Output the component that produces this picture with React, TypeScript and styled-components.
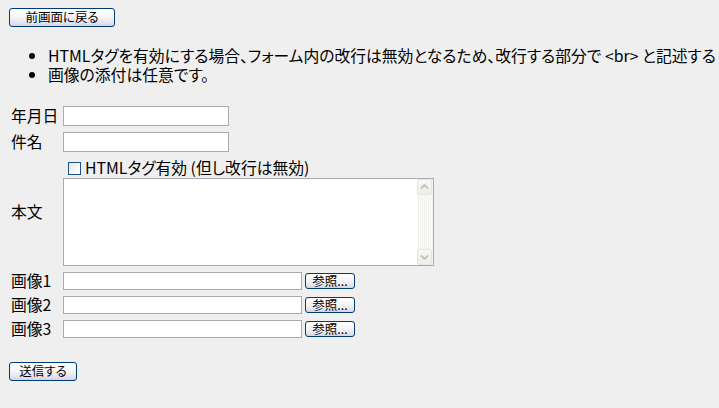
import styled, { createGlobalStyle } from 'styled-components';

const GlobalStyle = createGlobalStyle`
  html,
  body {
    margin: 0;
    overflow: hidden;
    background: #efefef;
  }

  body {
    font-family: 'Noto Sans CJK JP', 'Noto Sans', sans-serif;
    font-size: 15.8px;
    font-feature-settings: 'palt';
    color: #000;
  }
`;

const Page = styled.div`
  padding: 8px 9px;
`;

const XpButton = styled.button<{ $width: number; $height?: number }>`
  display: flex;
  align-items: center;
  justify-content: center;
  box-sizing: border-box;
  width: ${({ $width }) => $width}px;
  height: ${({ $height }) => $height ?? 19}px;
  margin: 0;
  padding: 0;
  border: 1px solid #003c74;
  border-radius: 3px;
  background: linear-gradient(#ffffff 0%, #f6f6f9 45%, #e4e4ee 80%, #d4d4e2 100%);
  font-family: inherit;
  font-size: 12.5px;
  font-feature-settings: 'palt';
  line-height: 1;
  color: #000;
`;

const NoteList = styled.ul`
  margin: 19px 0 0;
  padding-left: 39px;
  line-height: 19px;

  li {
    white-space: nowrap;
  }
`;

const FormGrid = styled.div`
  display: grid;
  grid-template-columns: 54px max-content;
  row-gap: 6px;
  align-items: center;
  margin-top: 22px;
`;

const FieldLabel = styled.div`
  padding-left: 2px;
  line-height: 18px;
`;

const TextInput = styled.input<{ $width: number; $height: number }>`
  display: block;
  box-sizing: border-box;
  width: ${({ $width }) => $width}px;
  height: ${({ $height }) => $height}px;
  margin: 0;
  padding: 0 2px;
  border: 1px solid #a5acb2;
  background: #fff;
  font: inherit;
  font-size: 13px;
  outline: none;
`;

const BodyCell = styled.div`
  display: flex;
  flex-direction: column;
`;

const CheckLine = styled.label`
  display: flex;
  align-items: center;
  height: 20px;
  line-height: 20px;
`;

const CheckBox = styled.input`
  appearance: none;
  box-sizing: border-box;
  width: 13px;
  height: 13px;
  margin: 0 4px 0 5px;
  border: 1px solid #1c5180;
  background: linear-gradient(135deg, #e4e4de 0%, #f8f8f6 60%, #ffffff 100%);
`;

const TextAreaBox = styled.div`
  display: flex;
  box-sizing: border-box;
  width: 371px;
  height: 88px;
  border: 1px solid #a5acb2;
  background: #fff;
`;

const BodyText = styled.textarea`
  flex: 1;
  margin: 0;
  padding: 2px;
  border: none;
  outline: none;
  resize: none;
  background: transparent;
  font: inherit;
  font-size: 13px;
`;

const ScrollBar = styled.div`
  display: flex;
  flex-direction: column;
  justify-content: space-between;
  width: 16px;
  background: repeating-linear-gradient(90deg, #fafaf8 0 1px, #f2f2ef 1px 2px);
`;

const ScrollButton = styled.div`
  display: flex;
  align-items: center;
  justify-content: center;
  box-sizing: border-box;
  width: 15px;
  height: 16px;
  border: 1px solid #e6e6de;
  border-radius: 2px;
  background: linear-gradient(#f8f8f4, #eeeee8);
`;

const FileField = styled.div`
  display: flex;
  align-items: center;
  gap: 3px;
`;

const SubmitRow = styled.div`
  margin-top: 24px;
`;

const Chevron = ({ down }: { down?: boolean }) => (
  <svg width="9" height="6" viewBox="0 0 9 6">
    <path
      d={down ? 'M1 1.5 L4.5 5 L8 1.5' : 'M1 4.5 L4.5 1 L8 4.5'}
      fill="none"
      stroke="#c4c4bc"
      strokeWidth="2"
    />
  </svg>
);

const imageFields = ['画像1', '画像2', '画像3'];

export default function App() {
  return (
    <Page>
      <GlobalStyle />
      <XpButton $width={106}>前画面に戻る</XpButton>

      <NoteList>
        <li>
          HTMLタグを有効にする場合、フォーム内の改行は無効となるため、改行する部分で {'<br>'} と記述する
        </li>
        <li>画像の添付は任意です。</li>
      </NoteList>

      <FormGrid>
        <FieldLabel>年月日</FieldLabel>
        <TextInput $width={166} $height={20} />

        <FieldLabel>件名</FieldLabel>
        <TextInput $width={166} $height={20} />

        <FieldLabel>本文</FieldLabel>
        <BodyCell>
          <CheckLine>
            <CheckBox type="checkbox" />
            HTMLタグ有効 (但し改行は無効)
          </CheckLine>
          <TextAreaBox>
            <BodyText />
            <ScrollBar>
              <ScrollButton>
                <Chevron />
              </ScrollButton>
              <ScrollButton>
                <Chevron down />
              </ScrollButton>
            </ScrollBar>
          </TextAreaBox>
        </BodyCell>

        {imageFields.map(label => (
          <FieldRow key={label} label={label} />
        ))}
      </FormGrid>

      <SubmitRow>
        <XpButton $width={68}>送信する</XpButton>
      </SubmitRow>
    </Page>
  );
}

function FieldRow({ label }: { label: string }) {
  return (
    <>
      <FieldLabel>{label}</FieldLabel>
      <FileField>
        <TextInput $width={239} $height={18} />
        <XpButton $width={50} $height={16}>
          参照...
        </XpButton>
      </FileField>
    </>
  );
}
